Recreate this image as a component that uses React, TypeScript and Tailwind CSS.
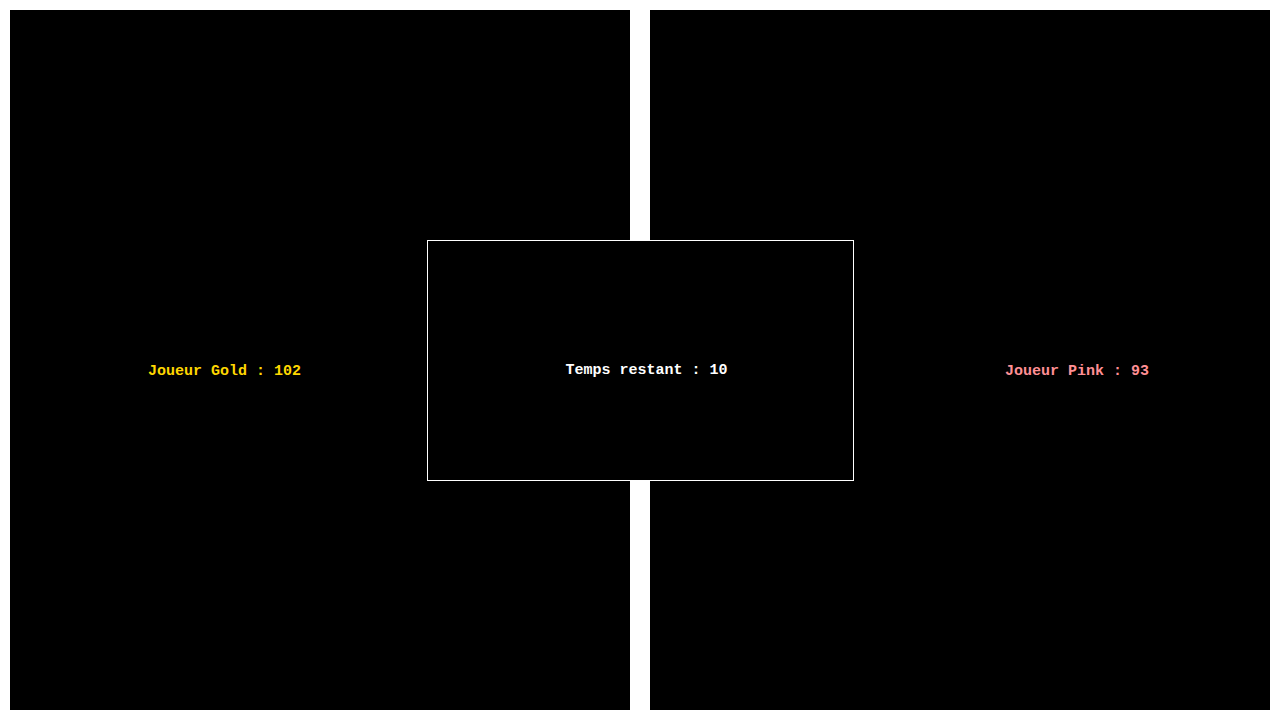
export default function App() {
    return (
        <div className="relative h-[720px] w-[1280px] bg-white flex gap-[20px] p-[10px] font-['Liberation_Mono','Courier_New',monospace] font-bold text-[15px]">
            <div className="w-[620px] shrink-0 bg-black flex items-center pt-[24px] pl-[138px]">
                <span className="text-[#ffd700] whitespace-pre">Joueur Gold : 102</span>
            </div>
            <div className="w-[620px] shrink-0 bg-black flex items-center pt-[24px] pl-[355px]">
                <span className="text-[#ff8f94] whitespace-pre">Joueur Pink : 93</span>
            </div>

            <div className="absolute left-[427px] top-[240px] w-[427px] h-[241px] bg-black border border-white flex items-center justify-center pt-[21px] pl-[12px]">
                <span className="text-white whitespace-pre">Temps restant : 10</span>
            </div>
        </div>
    )
}
